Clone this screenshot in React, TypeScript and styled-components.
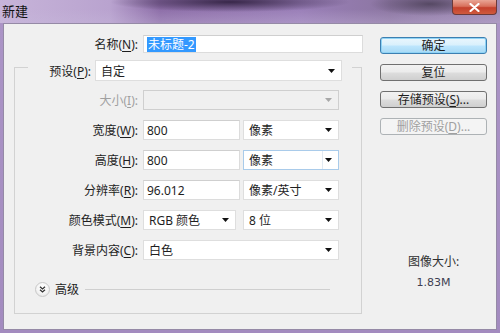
import React from 'react';
import styled, { createGlobalStyle, css } from 'styled-components';

const GlobalStyle = createGlobalStyle`
  html, body {
    margin: 0;
    padding: 0;
  }
  body {
    width: 500px;
    height: 333px;
    overflow: hidden;
    font-family: "Noto Sans", "Noto Sans CJK SC", sans-serif;
    font-size: 12px;
    color: #1e1e1e;
  }
`;

const Window = styled.div`
  width: 500px;
  height: 333px;
  box-sizing: border-box;
  display: flex;
  flex-direction: column;
  padding: 0 3px 3px 3px;
  background:
    linear-gradient(180deg, rgba(0, 0, 0, 0) 0, rgba(0, 0, 0, 0) 23px, #ab94c6 23px, #a38bbf 100%),
    linear-gradient(90deg, #c7b4d9 0%, #b9a3cf 22%, #8d6ea8 32%, #9a7fb8 60%, #8c76a2 78%, #a08cb6 100%);
`;

const TitleBar = styled.div`
  height: 23px;
  display: flex;
  justify-content: space-between;
  align-items: flex-start;
  margin: 0 -3px;
  background:
    radial-gradient(ellipse 120px 10px at 230px 2px, rgba(40, 25, 55, 0.85), rgba(40, 25, 55, 0) 100%),
    radial-gradient(ellipse 60px 12px at 430px 4px, rgba(60, 50, 70, 0.7), rgba(60, 50, 70, 0) 100%),
    linear-gradient(180deg, rgba(255, 255, 255, 0) 40%, rgba(200, 185, 220, 0.35) 100%);
`;

const Title = styled.span`
  font-family: "Noto Sans CJK SC", sans-serif;
  font-size: 13px;
  line-height: 22px;
  padding-left: 2px;
  color: #111;
`;

const CloseButton = styled.div`
  width: 45px;
  height: 15px;
  margin-right: 3px;
  box-sizing: border-box;
  border: 1px solid #6b3a3a;
  border-top: none;
  border-radius: 0 0 4px 4px;
  background: linear-gradient(180deg, #e9a595 0%, #d8705c 45%, #c4402c 55%, #cf5a3e 100%);
  display: flex;
  align-items: center;
  justify-content: center;
`;

const Content = styled.div`
  flex: 1;
  display: flex;
  background: #f0f0f0;
  border: 1px solid #958aa6;
`;

const LeftColumn = styled.div`
  width: 366px;
  padding-top: 11px;
  display: flex;
  flex-direction: column;
`;

const RightColumn = styled.div`
  width: 107px;
  margin-left: 10px;
  padding-top: 13px;
  display: flex;
  flex-direction: column;
  gap: 10px;
`;

const Row = styled.div<{ $top?: number; $height?: number }>`
  display: flex;
  align-items: center;
  height: ${(p) => p.$height ?? 20}px;
  margin-top: ${(p) => p.$top ?? 0}px;
`;

const Label = styled.span<{ $width: number; $disabled?: boolean }>`
  width: ${(p) => p.$width}px;
  flex-shrink: 0;
  text-align: right;
  margin-right: 5px;
  white-space: nowrap;
  color: ${(p) => (p.$disabled ? '#a0a0a0' : '#1e1e1e')};
`;

const Key = styled.u`
  text-underline-offset: 2px;
`;

const TextBox = styled.div<{ $width: number }>`
  width: ${(p) => p.$width}px;
  height: 100%;
  box-sizing: border-box;
  background: #fff;
  border: 1px solid #dcdcdc;
  border-top-color: #cfcfcf;
  padding-left: 3px;
  display: flex;
  align-items: center;
  white-space: nowrap;
`;

const Selected = styled.span`
  background: #3399ff;
  color: #fff;
  padding: 0 1px;
  line-height: 15px;
`;

const SelectBox = styled.div<{ $width: number; $disabled?: boolean; $focused?: boolean; $gap?: number }>`
  width: ${(p) => p.$width}px;
  height: 100%;
  margin-left: ${(p) => p.$gap ?? 0}px;
  box-sizing: border-box;
  background: ${(p) => (p.$disabled ? '#f0f0f0' : '#fff')};
  border: 1px solid ${(p) => (p.$disabled ? '#cfcfcf' : '#dedede')};
  padding-left: 5px;
  display: flex;
  align-items: center;
  position: relative;
  white-space: nowrap;
  ${(p) =>
    p.$focused &&
    css`
      border-color: #a9cbea;
      &::after {
        content: '';
        position: absolute;
        right: 15px;
        top: 0;
        bottom: 0;
        border-left: 1px solid #e2eaf2;
      }
    `}
`;

const Arrow = styled.svg<{ $disabled?: boolean }>`
  position: absolute;
  right: 6px;
  top: 50%;
  margin-top: -2px;
  fill: ${(p) => (p.$disabled ? '#a8a8a8' : '#111')};
`;

const GroupBox = styled.div`
  margin: 14px 0 0 10px;
  width: 348px;
  box-sizing: border-box;
  border: 1px solid #d2d2d2;
  padding-bottom: 16px;
  display: flex;
  flex-direction: column;
`;

const Legend = styled.div`
  margin: -8px 0 0 13px;
  width: 324px;
  height: 21px;
  background: #f0f0f0;
  display: flex;
  align-items: center;
`;

const AdvancedRow = styled.div`
  margin-top: 21px;
  height: 16px;
  padding-left: 20px;
  display: flex;
  align-items: center;
`;

const ToggleCircle = styled.div`
  width: 15px;
  height: 15px;
  border-radius: 50%;
  box-sizing: border-box;
  border: 1px solid #c8c8c8;
  background: radial-gradient(circle at 50% 35%, #ffffff 0%, #f4f4f4 55%, #dcdcdc 100%);
  display: flex;
  align-items: center;
  justify-content: center;
  margin-right: 5px;
`;

const Divider = styled.div`
  flex: 1;
  height: 1px;
  background: #cfcfcf;
  margin: 0 31px 0 6px;
`;

const Button = styled.div<{ $primary?: boolean; $disabled?: boolean }>`
  height: 17px;
  box-sizing: border-box;
  border: 1px solid #707070;
  border-radius: 3px;
  background: linear-gradient(180deg, #f2f2f2 0%, #ebebeb 48%, #dddddd 52%, #cfcfcf 100%);
  display: flex;
  align-items: center;
  justify-content: center;
  white-space: nowrap;
  line-height: 1;
  ${(p) =>
    p.$primary &&
    css`
      border-color: #3c7fb1;
      background: linear-gradient(180deg, #eaf6fd 0%, #d9f0fc 48%, #bee6fd 52%, #a7d9f5 100%);
      box-shadow: inset 0 0 0 1px #8fd3f5;
    `}
  ${(p) =>
    p.$disabled &&
    css`
      border-color: #adb2b5;
      background: #f4f4f4;
      color: #a0a0a0;
    `}
`;

const SizeInfo = styled.div`
  margin-top: 109px;
  display: flex;
  flex-direction: column;
  align-items: center;
  gap: 5px;
  color: #303030;
  line-height: 16px;
`;

const SizeValue = styled.span`
  font-family: "DejaVu Sans", sans-serif;
  font-size: 11px;
  color: #3e3e52;
`;

function DropArrow({ disabled }: { disabled?: boolean }) {
  return (
    <Arrow $disabled={disabled} width="7" height="4" viewBox="0 0 7 4">
      <polygon points="0,0 7,0 3.5,4" />
    </Arrow>
  );
}

interface SelectProps {
  width: number;
  value?: string;
  disabled?: boolean;
  focused?: boolean;
  gap?: number;
}

function Select({ width, value, disabled, focused, gap }: SelectProps) {
  return (
    <SelectBox $width={width} $disabled={disabled} $focused={focused} $gap={gap}>
      {value}
      <DropArrow disabled={disabled} />
    </SelectBox>
  );
}

function FieldLabel({ text, hotkey, disabled, width = 123 }: { text: string; hotkey: string; disabled?: boolean; width?: number }) {
  return (
    <Label $width={width} $disabled={disabled}>
      {text}(<Key>{hotkey}</Key>):
    </Label>
  );
}

export default function App() {
  return (
    <>
      <GlobalStyle />
      <Window>
        <TitleBar>
          <Title>新建</Title>
          <CloseButton>
            <svg width="11" height="9" viewBox="0 0 11 9">
              <path d="M1.5 1 L9.5 8 M9.5 1 L1.5 8" stroke="#fff" strokeWidth="2.2" strokeLinecap="round" />
            </svg>
          </CloseButton>
        </TitleBar>
        <Content>
          <LeftColumn>
            <Row $height={18}>
              <FieldLabel text="名称" hotkey="N" width={134} />
              <TextBox $width={220}>
                <Selected>未标题-2</Selected>
              </TextBox>
            </Row>

            <GroupBox>
              <Legend>
                <Label $width={63} style={{ marginRight: 4 }}>
                  预设(<Key>P</Key>):
                </Label>
                <Select width={247} value="自定" />
              </Legend>

              <Row $top={9}>
                <FieldLabel text="大小" hotkey="I" disabled />
                <Select width={196} disabled />
              </Row>
              <Row $top={10}>
                <FieldLabel text="宽度" hotkey="W" />
                <TextBox $width={97}>800</TextBox>
                <Select width={96} value="像素" gap={3} />
              </Row>
              <Row $top={10}>
                <FieldLabel text="高度" hotkey="H" />
                <TextBox $width={97}>800</TextBox>
                <Select width={96} value="像素" gap={3} focused />
              </Row>
              <Row $top={10}>
                <FieldLabel text="分辨率" hotkey="R" />
                <TextBox $width={97}>96.012</TextBox>
                <Select width={96} value="像素/英寸" gap={3} />
              </Row>
              <Row $top={10}>
                <FieldLabel text="颜色模式" hotkey="M" />
                <Select width={93} value="RGB 颜色" />
                <Select width={96} value="8 位" gap={7} />
              </Row>
              <Row $top={10}>
                <FieldLabel text="背景内容" hotkey="C" />
                <Select width={196} value="白色" />
              </Row>

              <AdvancedRow>
                <ToggleCircle>
                  <svg width="7" height="7" viewBox="0 0 7 7">
                    <path d="M1 0.8 L3.5 3 L6 0.8 M1 3.8 L3.5 6 L6 3.8" stroke="#333" strokeWidth="1.3" fill="none" />
                  </svg>
                </ToggleCircle>
                <span>高级</span>
                <Divider />
              </AdvancedRow>
            </GroupBox>
          </LeftColumn>

          <RightColumn>
            <Button $primary>确定</Button>
            <Button>复位</Button>
            <Button>
              存储预设(<Key>S</Key>)...
            </Button>
            <Button $disabled>
              删除预设(<Key>D</Key>)...
            </Button>
            <SizeInfo>
              <span>图像大小:</span>
              <SizeValue>1.83M</SizeValue>
            </SizeInfo>
          </RightColumn>
        </Content>
      </Window>
    </>
  );
}
